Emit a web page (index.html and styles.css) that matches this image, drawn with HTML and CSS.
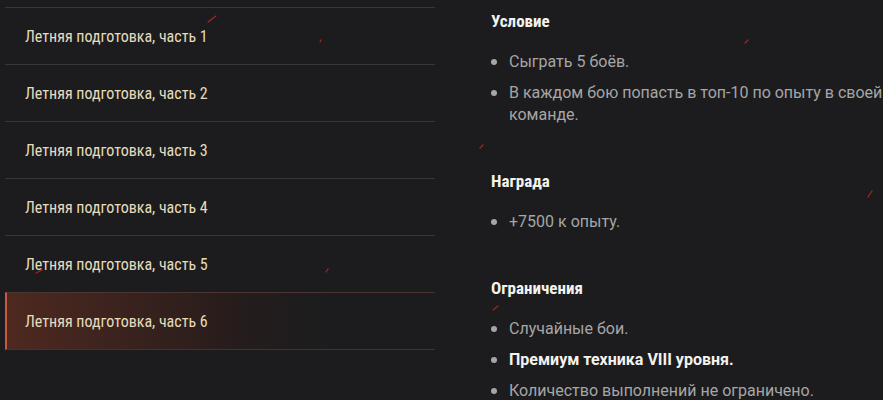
FILE: index.html
```html
<!DOCTYPE html>
<html lang="ru">
<head>
    <meta charset="UTF-8">
    <meta name="viewport" content="width=device-width, initial-scale=1.0">
    <link rel="stylesheet" href="styles.css">
</head>
<body>
    <svg class="sparks" width="883" height="400" viewBox="0 0 883 400">
        <line x1="208" y1="22" x2="216" y2="16" />
        <line x1="320" y1="42" x2="321" y2="40" />
        <line x1="36" y1="273" x2="42" y2="270" />
        <line x1="326" y1="272" x2="328" y2="269" />
        <line x1="745" y1="43" x2="748" y2="40" />
        <line x1="493" y1="310" x2="498" y2="306" />
        <line x1="868" y1="197" x2="872" y2="191" />
        <line x1="480" y1="148" x2="483" y2="145" />
    </svg>

    <div class="page">
        <ul class="stages">
            <li class="stage">Летняя подготовка, часть 1</li>
            <li class="stage">Летняя подготовка, часть 2</li>
            <li class="stage">Летняя подготовка, часть 3</li>
            <li class="stage">Летняя подготовка, часть 4</li>
            <li class="stage">Летняя подготовка, часть 5</li>
            <li class="stage active">Летняя подготовка, часть 6</li>
        </ul>

        <div class="details">
            <div class="block">
                <h3>Условие</h3>
                <ul class="points">
                    <li>Сыграть 5 боёв.</li>
                    <li>В каждом бою попасть в топ-10 по опыту в своей команде.</li>
                </ul>
            </div>
            <div class="block">
                <h3>Награда</h3>
                <ul class="points">
                    <li>+7500 к опыту.</li>
                </ul>
            </div>
            <div class="block">
                <h3>Ограничения</h3>
                <ul class="points">
                    <li>Случайные бои.</li>
                    <li class="strong">Премиум техника VIII уровня.</li>
                    <li>Количество выполнений не ограничено.</li>
                </ul>
            </div>
        </div>
    </div>
</body>
</html>
```

FILE: styles.css
```css
html, body {
    margin: 0;
    background-color: #1c1c1e;
    overflow: hidden;
}

.page {
    display: flex;
    gap: 56px;
    padding-left: 5px;
}

/* stage list on the left */
.stages {
    list-style: none;
    margin: 0;
    padding: 7px 0 0 0;
    width: 430px;
    flex-shrink: 0;
}

.stage {
    height: 56px;
    border-top: 1px solid #37373a;
    display: flex;
    align-items: center;
    padding-left: 20px;
    font-family: "Roboto Condensed", "Roboto", sans-serif;
    font-size: 16px;
    color: #e6dcbc;
}

.stage:last-child {
    border-bottom: 1px solid #37373a;
}

.stage.active {
    border-left: 2px solid #c85a40;
    padding-left: 18px;
    background: linear-gradient(90deg, #4e2920 0%, #3c231e 25%, #251c1c 55%, rgba(28, 28, 30, 0) 75%);
    border-top-color: #4a3530;
}

/* text on the right */
.details {
    flex: 1;
    padding-top: 11px;
    font-family: "Roboto", sans-serif;
}

.block {
    margin-bottom: 45px;
}

h3 {
    margin: 0 0 20px 0;
    font-family: "Roboto Condensed", "Roboto", sans-serif;
    font-size: 17px;
    line-height: 20px;
    font-weight: bold;
    color: #f4f2ee;
}

.points {
    list-style: none;
    margin: 0;
    padding: 0;
}

.points li {
    position: relative;
    padding-left: 18px;
    font-size: 16px;
    line-height: 22px;
    color: #a6a6a6;
    margin-bottom: 9px;
}

.points li::before {
    content: "";
    position: absolute;
    left: 0;
    top: 8px;
    width: 6px;
    height: 6px;
    border-radius: 50%;
    background-color: #a6a6a6;
}

.points li.strong {
    color: #f4f2ee;
    font-weight: bold;
}

.sparks {
    position: absolute;
    left: 0;
    top: 0;
    pointer-events: none;
}

.sparks line {
    stroke: #a8261c;
    stroke-width: 1.2;
    stroke-linecap: round;
}
```
